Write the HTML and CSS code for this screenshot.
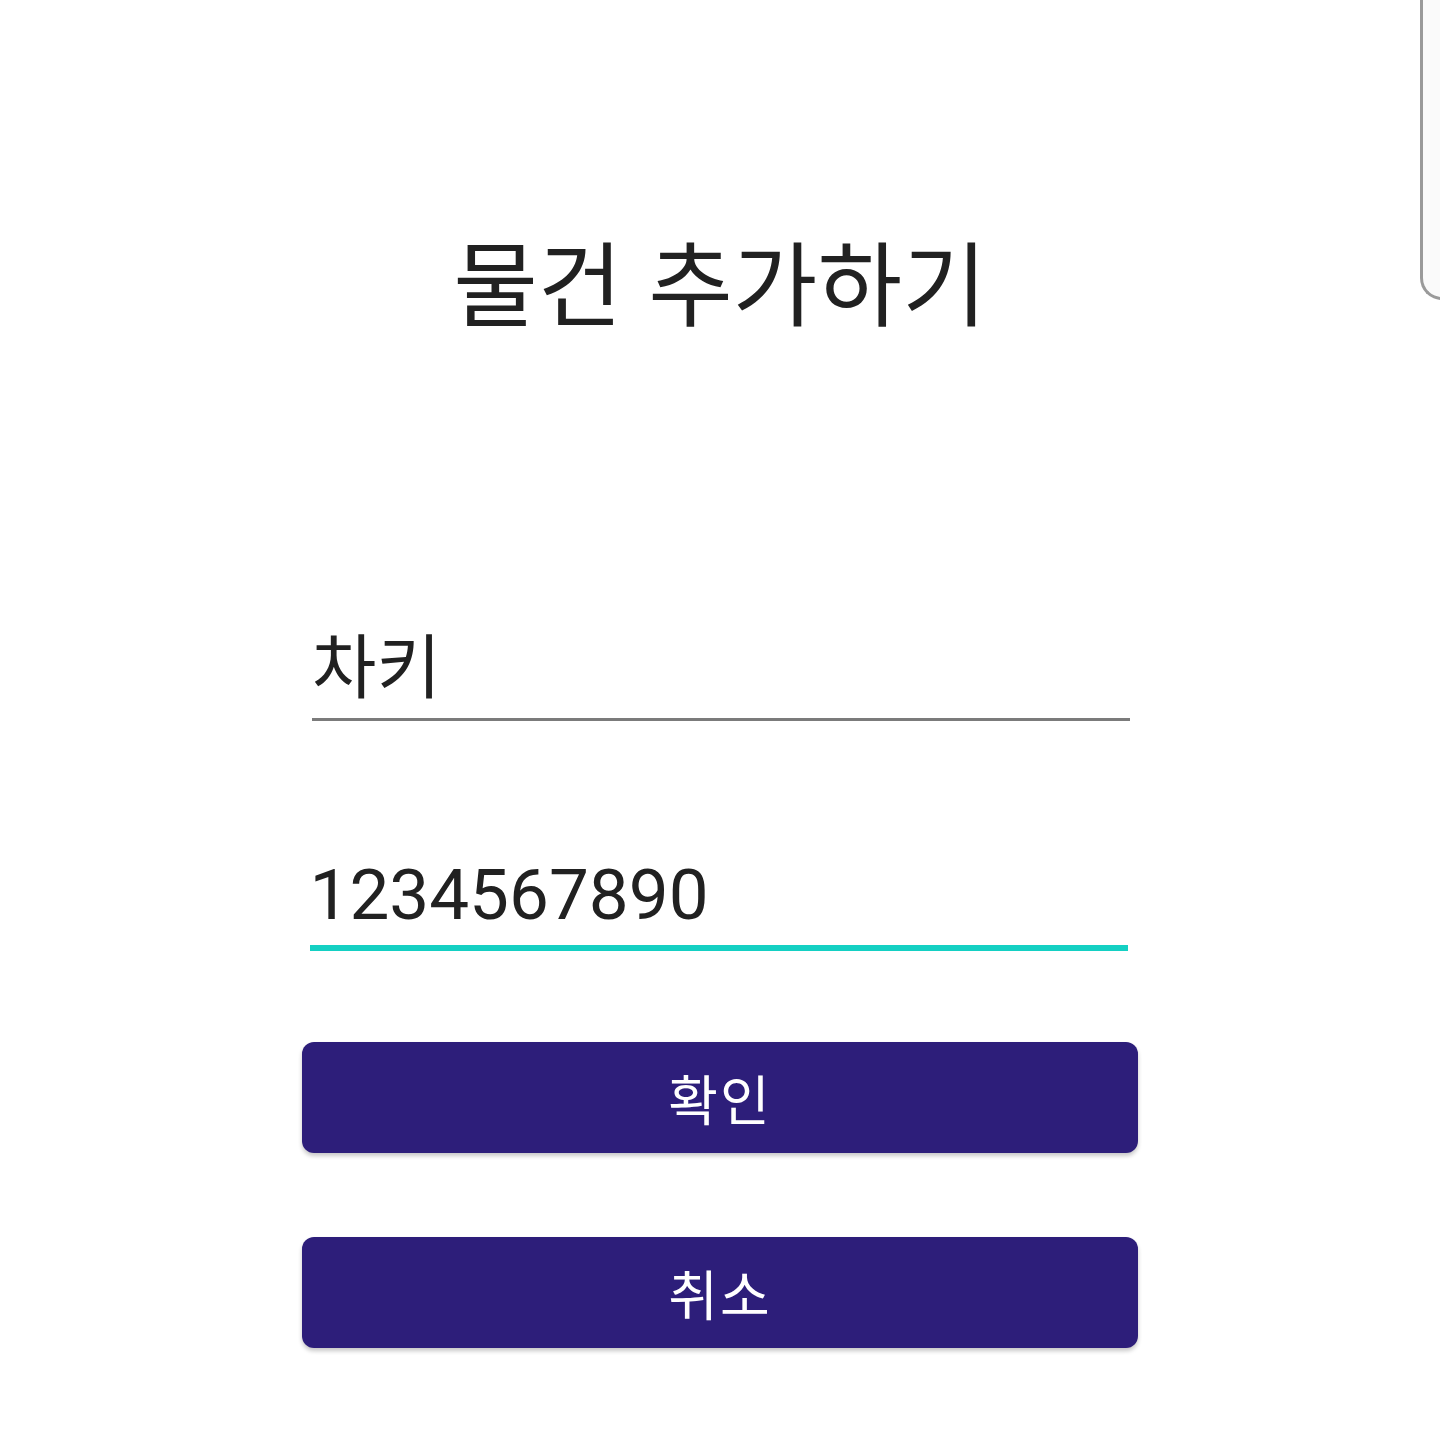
FILE: index.html
```html
<!DOCTYPE html>
<html lang="ko">
<head>
<meta charset="utf-8">
<link rel="stylesheet" href="styles.css">
</head>
<body>
<div class="edge"></div>
<main class="page">
  <h1 class="title">물건 추가하기</h1>
  <div class="field field-name">
    <div class="value">차키</div>
  </div>
  <div class="field field-num focused">
    <div class="value">1234567890</div>
  </div>
  <button class="btn btn-ok">확인</button>
  <button class="btn btn-cancel">취소</button>
</main>
</body>
</html>
```
FILE: styles.css
```css
html, body {
  margin: 0;
  padding: 0;
  background: #ffffff;
}
body {
  width: 1440px;
  height: 1440px;
  position: relative;
  overflow: hidden;
  font-family: Roboto, "Noto Sans CJK KR", sans-serif;
  color: #212121;
}
.edge {
  position: absolute;
  left: 1420px;
  top: -20px;
  width: 40px;
  height: 320px;
  border-left: 3px solid #9a9a9a;
  border-bottom: 3px solid #9a9a9a;
  border-bottom-left-radius: 22px;
  background: #fafafa;
  box-sizing: border-box;
}
.page {
  display: flex;
  flex-direction: column;
  align-items: center;
  padding-top: 214px;
}
.title {
  margin: 0;
  font-family: "Noto Sans CJK KR", sans-serif;
  font-weight: 400;
  font-size: 92px;
  line-height: 130px;
  color: #212121;
}
.field {
  width: 818px;
  display: flex;
  flex-direction: column;
}
.field .value {
  font-size: 71px;
  line-height: 90px;
  color: #212121;
}
.field-name {
  margin-top: 274px;
  margin-left: 2px;
  border-bottom: 3px solid #7b7b7b;
}
.field-name .value {
  font-family: "Noto Sans CJK KR", sans-serif;
  font-size: 70px;
  padding-bottom: 10px;
}
.field-num {
  margin-top: 129px;
  margin-left: -3px;
  border-bottom: 6px solid #14d0c3;
}
.field-num .value {
  padding-bottom: 5px;
}
.btn {
  width: 836px;
  height: 111px;
  border: none;
  border-radius: 12px;
  background: #2d1e7a;
  color: #ffffff;
  font-family: "Noto Sans CJK KR", sans-serif;
  font-size: 54px;
  letter-spacing: 2px;
  box-shadow: 0 3px 4px rgba(0,0,0,0.22);
  padding: 0;
}
.btn-ok {
  margin-top: 91px;
}
.btn-cancel {
  margin-top: 84px;
}
```
